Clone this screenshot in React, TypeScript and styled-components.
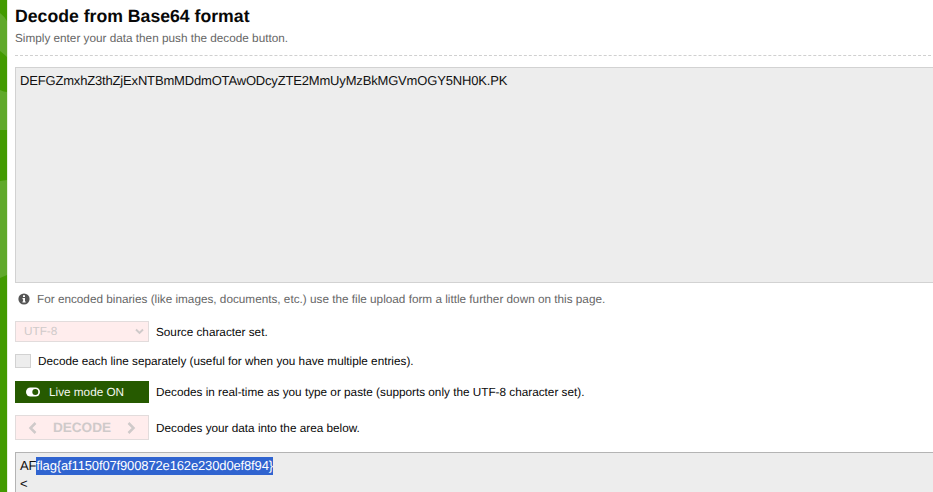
import React from "react";
import styled, { createGlobalStyle } from "styled-components";

const GlobalStyle = createGlobalStyle`
  * { box-sizing: border-box; }
  html, body { margin: 0; padding: 0; background: #fff; overflow: hidden; }
  body { font-family: "Liberation Sans", Arial, sans-serif; text-rendering: geometricPrecision; color: #111; }
`;

const Page = styled.div`
  display: flex;
  width: 933px;
  height: 492px;
  overflow: hidden;
`;

const SideStrip = styled.svg`
  flex: none;
  width: 8px;
  height: 492px;
`;

const Main = styled.main`
  flex: 1;
  min-width: 0;
  padding-left: 7px;
  display: flex;
  flex-direction: column;
`;

const Title = styled.h1`
  flex: none;
  margin: 5px 0 0;
  font-size: 17.67px;
  line-height: 22px;
  font-weight: 700;
  color: #080808;
`;

const Subtitle = styled.p`
  flex: none;
  margin: 2px 2px 0 0;
  height: 27px;
  font-size: 11.76px;
  line-height: 19px;
  color: #666;
  border-bottom: 1px dashed #d0d0d0;
`;

const TextBox = styled.div<{ $height: number; $border: string }>`
  flex: none;
  height: ${(p) => p.$height}px;
  padding: 4px 4px 0;
  border: 1px solid ${(p) => p.$border};
  border-right: 0;
  background: #ededed;
  font-size: 13px;
  letter-spacing: -0.17px;
  line-height: 18px;
  color: #111;
  white-space: pre;
`;

const Input = styled(TextBox)`
  margin-top: 11px;
`;

const Output = styled(TextBox)`
  margin-top: 12px;
  letter-spacing: -0.14px;
`;

const Selected = styled.span`
  display: inline-block;
  height: 18px;
  background: #3064d0;
  color: #fff;
`;

const Row = styled.div<{ $top: number; $height: number; $muted?: boolean }>`
  flex: none;
  display: flex;
  align-items: center;
  margin-top: ${(p) => p.$top}px;
  height: ${(p) => p.$height}px;
  gap: 7px;
  font-size: 11.75px;
  line-height: 18px;
  color: ${(p) => (p.$muted ? "#666" : "#080808")};
  white-space: nowrap;
`;

const Label = styled.span`
  padding-top: 2px;
`;

const InfoIcon = styled.svg`
  width: 12px;
  height: 12px;
  margin-left: 3px;
`;

const Control = styled.div`
  width: 134px;
  height: 100%;
  display: flex;
  align-items: center;
  border: 1px solid #e2dcdc;
  background: #ffeded;
  color: #cfcaca;
`;

const Select = styled(Control)`
  justify-content: space-between;
  padding: 0 4px 0 8px;
`;

const Checkbox = styled.span`
  width: 16px;
  height: 14px;
  border: 1px solid #d2d2d2;
  background: #ededed;
`;

const LiveButton = styled(Control)`
  border-color: #265a00;
  background: #265a00;
  color: #f4f8f0;
  gap: 9px;
  padding-left: 10px;
`;

const DecodeButton = styled(Control)`
  justify-content: space-between;
  padding: 0 12px;
  font-size: 13.6px;
  font-weight: 700;
`;

const Chevron = ({ d, w, h, sw }: { d: string; w: number; h: number; sw: number }) => (
  <svg width={w} height={h} viewBox={`0 0 ${w} ${h}`} fill="none" stroke="currentColor" strokeWidth={sw}>
    <path d={d} />
  </svg>
);

export default function App() {
  return (
    <>
      <GlobalStyle />
      <Page>
        <SideStrip viewBox="0 0 8 492">
          <rect width="7" height="492" fill="#429a00" />
          <path d="M0 13Q4 16 7 21V57Q4 54 0 51Z" fill="#60a92b" />
          <path d="M0 90Q4 92 7 92V130H0Z" fill="#60a92b" />
          <path d="M0 181L7 180V275L0 278Z" fill="#60a92b" />
          <rect x="7" width="1" height="492" fill="#e4f2da" />
        </SideStrip>
        <Main>
          <Title>Decode from Base64 format</Title>
          <Subtitle>Simply enter your data then push the decode button.</Subtitle>
          <Input $height={216} $border="#d2d2d2">
            DEFGZmxhZ3thZjExNTBmMDdmOTAwODcyZTE2MmUyMzBkMGVmOGY5NH0K.PK
          </Input>
          <Row $top={7} $height={18} $muted>
            <InfoIcon viewBox="0 0 12 12">
              <circle cx="6" cy="6" r="5.6" fill="#555" />
              <path d="M5 2.2h2v1.7H5zM4.5 5H7v3.4h.7v1.2H4.4V8.4h.7V6.2h-.6z" fill="#fff" />
            </InfoIcon>
            <Label>For encoded binaries (like images, documents, etc.) use the file upload form a little further down on this page.</Label>
          </Row>
          <Row $top={13} $height={21}>
            <Select>
              <span>UTF-8</span>
              <Chevron w={9} h={7} sw={1.9} d="M1 1.5L4.5 5L8 1.5" />
            </Select>
            <Label>Source character set.</Label>
          </Row>
          <Row $top={12} $height={14}>
            <Checkbox />
            <Label>Decode each line separately (useful for when you have multiple entries).</Label>
          </Row>
          <Row $top={13} $height={22}>
            <LiveButton>
              <svg width="14" height="10" viewBox="0 0 14 10">
                <rect x="0" y="0.5" width="14" height="9" rx="4.5" fill="#fff" />
                <circle cx="9.3" cy="5" r="3" fill="#265a00" />
              </svg>
              <Label>Live mode ON</Label>
            </LiveButton>
            <Label>Decodes in real-time as you type or paste (supports only the UTF-8 character set).</Label>
          </Row>
          <Row $top={12} $height={25}>
            <DecodeButton>
              <Chevron w={9} h={12} sw={2.5} d="M7.5 1L2.5 6L7.5 11" />
              <span>DECODE</span>
              <Chevron w={9} h={12} sw={2.5} d="M1.5 1L6.5 6L1.5 11" />
            </DecodeButton>
            <Label>Decodes your data into the area below.</Label>
          </Row>
          <Output $height={60} $border="#b4b4b4">
            AF<Selected>flag{"{af1150f07f900872e162e230d0ef8f94}"}</Selected>
            {"\n<"}
          </Output>
        </Main>
      </Page>
    </>
  );
}
